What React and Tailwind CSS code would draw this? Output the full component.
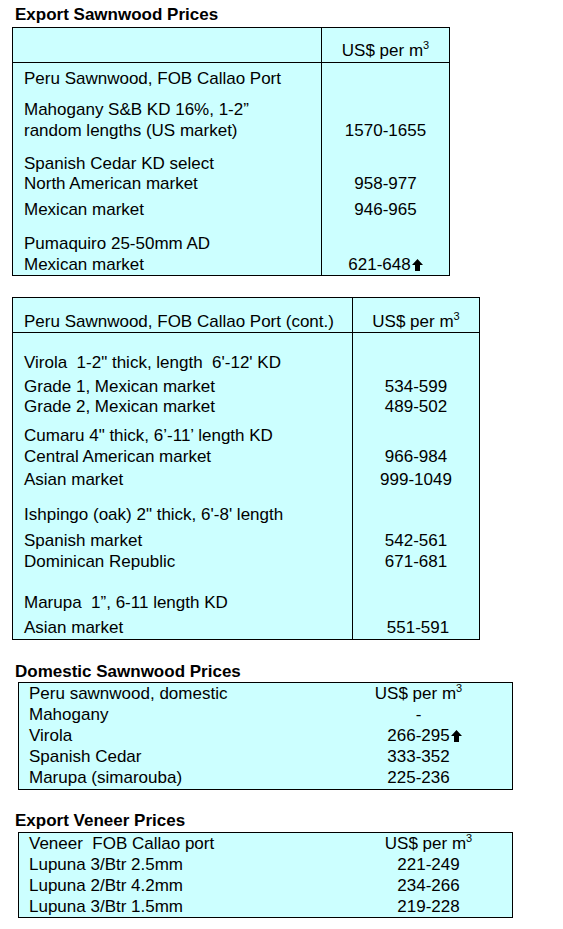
const font = { fontFamily: '"Liberation Sans", Arial, sans-serif' };

function Up() {
  return (
    <svg width="11" height="12" viewBox="0 0 11 12" className="ml-[1px] inline-block align-[-1px]">
      <path d="M5.5 0 L11 6 L8 6 L8 12 L3 12 L3 6 L0 6 Z" fill="#000" />
    </svg>
  );
}

function Per() {
  return (
    <span>
      US$ per m<sup className="relative -top-[7px] align-baseline text-[11px]">3</sup>
    </span>
  );
}

// one line of a two-column table, the left cell carries the divider
function Line({ label, value, pt = 0, lh = 'leading-[21px]', left, divider = true, vcls = '' }) {
  return (
    <div className={`grid ${left} ${lh}`}>
      <div className={`${divider ? 'border-r border-black pl-[11px]' : 'pl-[10px]'}`} style={{ paddingTop: pt }}>
        {label}
      </div>
      <div className={`text-center ${vcls}`} style={{ paddingTop: pt }}>
        {value}
      </div>
    </div>
  );
}

function Title({ children, cls = '' }) {
  return <h2 className={`pl-[15px] text-[17px] font-bold leading-[20px] text-black ${cls}`}>{children}</h2>;
}

export default function App() {
  const t1 = 'grid-cols-[309px_1fr]';
  const t2 = 'grid-cols-[340px_1fr]';
  const t3 = 'grid-cols-[306px_1fr]';
  const t4 = 'grid-cols-[326px_1fr]';

  return (
    <div className="min-h-[929px] w-[563px] bg-white pt-[5px] text-[17px] text-black" style={font}>
      <Title>Export Sawnwood Prices</Title>
      <div className="ml-[12px] mt-[2px] w-[438px] border border-black bg-[#ccffff]">
        <div className={`grid ${t1} border-b border-black leading-[21px]`}>
          <div className="border-r border-black" />
          <div className="pb-[1px] pt-[12px] text-center"><Per /></div>
        </div>
        <Line left={t1} pt={5} label="Peru Sawnwood, FOB Callao Port" />
        <Line left={t1} pt={10} label="Mahogany S&B KD 16%, 1-2”" />
        <Line left={t1} label="random lengths (US market)" value="1570-1655" />
        <Line left={t1} pt={13} lh="leading-[20px]" label="Spanish Cedar KD select" />
        <Line left={t1} lh="leading-[20px]" label="North American market" value="958-977" />
        <Line left={t1} pt={5} label="Mexican market" value="946-965" />
        <Line left={t1} pt={13} label="Pumaquiro 25-50mm AD" />
        <Line left={t1} label="Mexican market" value={<span>621-648<Up /></span>} />
      </div>

      <div className="ml-[12px] mt-[21px] w-[468px] border border-black bg-[#ccffff]">
        <div className="border-b border-black">
          <Line left={t2} pt={13} label="Peru Sawnwood, FOB Callao Port (cont.)" value={<Per />} />
        </div>
        <Line left={t2} pt={19} label={"Virola\u00a0 1-2\" thick, length\u00a0 6'-12' KD"} />
        <Line left={t2} pt={3} label="Grade 1, Mexican market" value="534-599" />
        <Line left={t2} lh="leading-[20px]" label="Grade 2, Mexican market" value="489-502" />
        <Line left={t2} pt={8} label="Cumaru 4&quot; thick, 6’-11’ length KD" />
        <Line left={t2} label="Central American market" value="966-984" />
        <Line left={t2} pt={2} label="Asian market" value="999-1049" />
        <Line left={t2} pt={14} label={"Ishpingo (oak) 2\" thick, 6'-8' length"} />
        <Line left={t2} pt={5} label="Spanish market" value="542-561" />
        <Line left={t2} label="Dominican Republic" value="671-681" />
        <Line left={t2} pt={20} label={"Marupa\u00a0 1”, 6-11 length KD"} />
        <Line left={t2} pt={4} lh="leading-[22px]" label="Asian market" value="551-591" vcls="pl-[4px]" />
      </div>

      <Title cls="mt-[22px]">Domestic Sawnwood Prices</Title>
      <div className="ml-[18px] w-[495px] border border-black bg-[#ccffff] pb-[1px]">
        <Line left={t3} divider={false} label="Peru sawnwood, domestic" value={<Per />} />
        <Line left={t3} divider={false} label="Mahogany" value="-" />
        <Line left={t3} divider={false} label="Virola" value={<span className="pl-[12px]">266-295<Up /></span>} />
        <Line left={t3} divider={false} label="Spanish Cedar" value="333-352" />
        <Line left={t3} divider={false} label="Marupa (simarouba)" value="225-236" />
      </div>

      <Title cls="mt-[21px]">Export Veneer Prices</Title>
      <div className="ml-[18px] mt-[1px] w-[495px] border border-black bg-[#ccffff]">
        <Line left={t4} divider={false} label={"Veneer\u00a0 FOB Callao port"} value={<Per />} />
        <Line left={t4} divider={false} label="Lupuna 3/Btr 2.5mm" value="221-249" />
        <Line left={t4} divider={false} label="Lupuna 2/Btr 4.2mm" value="234-266" />
        <Line left={t4} divider={false} label="Lupuna 3/Btr 1.5mm" value="219-228" />
      </div>
    </div>
  );
}
